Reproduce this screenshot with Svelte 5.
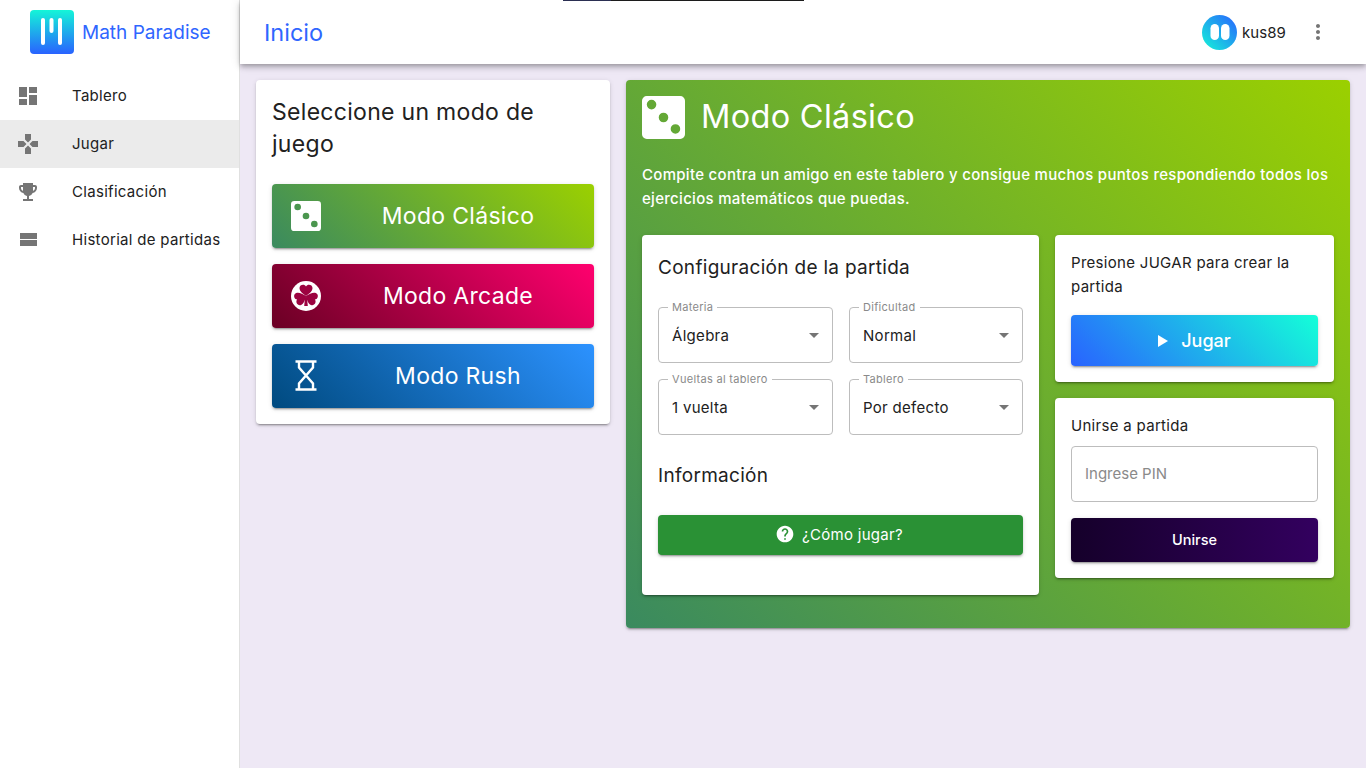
<script>
  const nav = [
    { label: 'Tablero', d: 'M3 13h8V3H3v10zm0 8h8v-6H3v6zm10 0h8V11h-8v10zm0-18v6h8V3h-8z' },
    { label: 'Jugar', active: true, d: 'M15 7.5V2H9v5.5l3 3 3-3zM7.5 9H2v6h5.5l3-3-3-3zM9 16.5V22h6v-5.5l-3-3-3 3zM16.5 9l-3 3 3 3H22V9h-5.5z' },
    { label: 'Clasificación', d: 'M19 5h-2V3H7v2H5c-1.1 0-2 .9-2 2v1c0 2.55 1.92 4.63 4.39 4.94.63 1.5 1.98 2.63 3.61 2.96V19H7v2h10v-2h-4v-3.1c1.63-.33 2.98-1.46 3.61-2.96C19.08 12.63 21 10.55 21 8V7c0-1.1-.9-2-2-2zM5 8V7h2v3.82C5.84 10.4 5 9.3 5 8zm14 0c0 1.3-.84 2.4-2 2.82V7h2v1z' },
    { label: 'Historial de partidas', d: 'M4 18h17v-6H4v6zM4 5v6h17V5H4z' }
  ];

  const selects = [
    { label: 'Materia', value: 'Álgebra' },
    { label: 'Dificultad', value: 'Normal' },
    { label: 'Vueltas al tablero', value: '1 vuelta' },
    { label: 'Tablero', value: 'Por defecto' }
  ];

  // rounded die with three cut-out dots
  const dice = 'M5 3H19A2 2 0 0 1 21 5V19A2 2 0 0 1 19 21H5A2 2 0 0 1 3 19V5A2 2 0 0 1 5 3ZM7 4.6a2 2 0 1 0 0 4a2 2 0 1 0 0-4ZM12 10a2 2 0 1 0 0 4a2 2 0 1 0 0-4ZM17 14.8a2 2 0 1 0 0 4a2 2 0 1 0 0-4Z';
  const lobe = 'M20 20C16.5 17.5 13.5 15 13.5 12C13.5 8.5 18.5 7.5 20 10.5C21.5 7.5 26.5 8.5 26.5 12C26.5 15 23.5 17.5 20 20Z';
</script>

<div class="layout">
  <aside class="sidebar">
    <div class="brand">
      <svg class="logo" viewBox="0 0 44 44">
        <defs>
          <linearGradient id="logoGrad" x1="0" y1="0" x2="0" y2="1">
            <stop offset="0" stop-color="#14f5d8" />
            <stop offset="1" stop-color="#2962ff" />
          </linearGradient>
        </defs>
        <rect width="44" height="44" rx="4" fill="url(#logoGrad)" />
        <rect x="11" y="8" width="4" height="27" rx="2" fill="#fff" />
        <rect x="19.5" y="8" width="4" height="15" rx="2" fill="#fff" />
        <rect x="28" y="8" width="4" height="27" rx="2" fill="#fff" />
      </svg>
      <span>Math Paradise</span>
    </div>
    <nav>
      {#each nav as item}
        <div class="nav-item" class:active={item.active}>
          <svg viewBox="0 0 24 24" width="24" height="24"><path d={item.d} fill="#757575" /></svg>
          <span>{item.label}</span>
        </div>
      {/each}
    </nav>
  </aside>

  <div class="main">
    <header>
      <div class="top-line"></div>
      <h1>Inicio</h1>
      <div class="user">
        <svg class="avatar" viewBox="0 0 35 35">
          <defs>
            <linearGradient id="avatarGrad" x1="0" y1="1" x2="1" y2="0">
              <stop offset="0" stop-color="#14f5d8" />
              <stop offset="1" stop-color="#2962ff" />
            </linearGradient>
          </defs>
          <circle cx="17.5" cy="17.5" r="17.5" fill="url(#avatarGrad)" />
          <rect x="8.5" y="9" width="8.5" height="16" rx="4.25" fill="#fff" />
          <rect x="19" y="9" width="8.5" height="16" rx="4.25" fill="#fff" />
        </svg>
        <span>kus89</span>
        <svg class="more" viewBox="0 0 24 24" width="24" height="24">
          <path fill="#757575" d="M12 8c1.1 0 2-.9 2-2s-.9-2-2-2-2 .9-2 2 .9 2 2 2zm0 2c-1.1 0-2 .9-2 2s.9 2 2 2 2-.9 2-2-.9-2-2-2zm0 6c-1.1 0-2 .9-2 2s.9 2 2 2 2-.9 2-2-.9-2-2-2z" />
        </svg>
      </div>
    </header>

    <main>
      <section class="card modes">
        <h2>Seleccione un modo de juego</h2>
        <button class="mode classic">
          <svg viewBox="0 0 24 24" width="40" height="40"><path d={dice} fill="#fff" fill-rule="evenodd" /></svg>
          <span>Modo Clásico</span>
        </button>
        <button class="mode arcade">
          <svg viewBox="0 0 40 40" width="40" height="40">
            <circle cx="20" cy="20" r="15" fill="#fff" />
            <g fill="#9c0340">
              <path d={lobe} />
              <path d={lobe} transform="rotate(112 20 20)" />
              <path d={lobe} transform="rotate(-112 20 20)" />
              <path d="M19.2 20h1.6l1 10h-3.6z" />
            </g>
          </svg>
          <span>Modo Arcade</span>
        </button>
        <button class="mode rush">
          <svg viewBox="0 0 40 40" width="40" height="40" fill="none" stroke="#fff" stroke-width="2.4">
            <path d="M9.5 5.5h21M9.5 33.5h21M13 5.5v6l14 16v6M27 5.5v6l-14 16v6" />
          </svg>
          <span>Modo Rush</span>
        </button>
      </section>

      <section class="card detail">
        <div class="detail-head">
          <svg viewBox="3 3 18 18" width="43" height="43"><path d={dice} fill="#fff" fill-rule="evenodd" /></svg>
          <h2>Modo Clásico</h2>
        </div>
        <p class="intro">Compite contra un amigo en este tablero y consigue muchos puntos respondiendo todos los ejercicios matemáticos que puedas.</p>

        <div class="columns">
          <div class="card config">
            <h3>Configuración de la partida</h3>
            <div class="fields">
              {#each selects as field}
                <div class="field">
                  <span class="field-label">{field.label}</span>
                  <span>{field.value}</span>
                  <i class="caret"></i>
                </div>
              {/each}
            </div>
            <h3 class="info">Información</h3>
            <button class="howto">
              <svg viewBox="0 0 24 24" width="20" height="20">
                <path fill="#fff" d="M12 2C6.48 2 2 6.48 2 12s4.48 10 10 10 10-4.48 10-10S17.52 2 12 2zm1 17h-2v-2h2v2zm2.07-7.75l-.9.92C13.45 12.9 13 13.5 13 15h-2v-.5c0-1.1.45-2.1 1.17-2.83l1.24-1.26c.37-.36.59-.86.59-1.41 0-1.1-.9-2-2-2s-2 .9-2 2H8c0-2.21 1.79-4 4-4s4 1.79 4 4c0 .88-.36 1.68-.93 2.25z" />
              </svg>
              <span>¿Cómo jugar?</span>
            </button>
          </div>

          <div class="side">
            <div class="card play">
              <p>Presione JUGAR para crear la partida</p>
              <button class="jugar"><i class="play-icon"></i><span>Jugar</span></button>
            </div>
            <div class="card join">
              <p>Unirse a partida</p>
              <input type="text" placeholder="Ingrese PIN" />
              <button class="unirse">Unirse</button>
            </div>
          </div>
        </div>
      </section>
    </main>
  </div>
</div>

<style>
  :global(body) {
    margin: 0;
    background: #eee8f5;
    color: #212121;
    font-family: Inter, "Liberation Sans", sans-serif;
    letter-spacing: .3px;
  }

  * {
    box-sizing: border-box;
  }

  h1, h2, h3, p {
    margin: 0;
    font-weight: 400;
  }

  button {
    border: 0;
    padding: 0;
    color: #fff;
    font-family: inherit;
    letter-spacing: inherit;
    border-radius: 4px;
    box-shadow: 0 3px 1px -2px rgba(0, 0, 0, .2), 0 2px 2px rgba(0, 0, 0, .14), 0 1px 5px rgba(0, 0, 0, .12);
  }

  .layout {
    display: flex;
    min-height: 768px;
  }

  .sidebar {
    width: 240px;
    flex-shrink: 0;
    background: #fff;
    border-right: 1px solid #e0e0e0;
  }

  .brand {
    height: 72px;
    padding: 10px 0 0 30px;
    display: flex;
    align-items: flex-start;
    gap: 8px;
    color: #2f66ff;
    font-size: 19px;
    letter-spacing: 0;
  }

  .brand span {
    line-height: 46px;
  }

  .logo {
    width: 44px;
    height: 44px;
  }

  .nav-item {
    height: 48px;
    padding-left: 16px;
    display: flex;
    align-items: center;
    gap: 32px;
    font-size: 15px;
  }

  .nav-item span {
    margin-bottom: 2px;
  }

  .nav-item.active {
    background: #ebebeb;
  }

  .main {
    flex: 1;
    min-width: 0;
  }

  header {
    position: relative;
    height: 64px;
    padding: 0 36px 0 24px;
    display: flex;
    align-items: center;
    justify-content: space-between;
    background: #fff;
    box-shadow: 0 2px 4px -1px rgba(0, 0, 0, .2), 0 4px 5px rgba(0, 0, 0, .14), 0 1px 10px rgba(0, 0, 0, .12);
  }

  .top-line {
    position: absolute;
    left: 323px;
    top: 0;
    width: 241px;
    height: 1px;
    background: linear-gradient(to right, #2b2f52 20%, #1c1c1c 20%);
  }

  h1 {
    font-size: 23.5px;
    color: #2f66ff;
    letter-spacing: 0;
  }

  .user {
    display: flex;
    align-items: center;
    font-size: 15px;
    letter-spacing: .1px;
  }

  .avatar {
    width: 35px;
    height: 35px;
    margin-right: 5px;
  }

  .more {
    margin-left: 20px;
  }

  main {
    padding: 16px;
    display: flex;
    align-items: flex-start;
    gap: 16px;
  }

  .card {
    background: #fff;
    border-radius: 4px;
    box-shadow: 0 3px 1px -2px rgba(0, 0, 0, .2), 0 2px 2px rgba(0, 0, 0, .14), 0 1px 5px rgba(0, 0, 0, .12);
  }

  .modes {
    width: 354px;
    flex-shrink: 0;
    padding: 16px;
    display: flex;
    flex-direction: column;
    gap: 16px;
  }

  .modes h2 {
    font-size: 23px;
    line-height: 32px;
    margin-bottom: 8px;
  }

  .mode {
    height: 64px;
    padding-left: 14px;
    display: flex;
    align-items: center;
    font-size: 23px;
  }

  .mode span {
    flex: 1;
    padding-right: 4px;
    text-align: center;
  }

  .classic, .detail {
    background: linear-gradient(45deg, #3a8a5f, #9bd000);
  }

  .arcade {
    background: linear-gradient(45deg, #6a0024, #ff006e);
  }

  .rush {
    background: linear-gradient(45deg, #004a7f, #2c92ff);
  }

  .detail {
    width: 724px;
    height: 548px;
    padding: 16px;
  }

  .detail-head {
    display: flex;
    align-items: center;
    gap: 16px;
    color: #fff;
  }

  .detail-head h2 {
    font-size: 32.5px;
    margin-top: -2px;
  }

  .intro {
    margin-top: 24px;
    color: #fff;
    font-size: 15px;
    font-weight: 500;
    line-height: 24px;
  }

  .columns {
    margin-top: 24px;
    display: flex;
    align-items: flex-start;
    gap: 16px;
  }

  .config {
    width: 397px;
    height: 360px;
    padding: 16px;
  }

  h3 {
    height: 32px;
    font-size: 19px;
    line-height: 34px;
  }

  .fields {
    margin-top: 24px;
    display: grid;
    grid-template-columns: 175px 174px;
    gap: 16px;
  }

  .field {
    position: relative;
    height: 56px;
    padding-left: 13px;
    display: flex;
    align-items: center;
    border: 1px solid #bdbdbd;
    border-radius: 4px;
    font-size: 15px;
  }

  .field-label {
    position: absolute;
    left: 9px;
    top: -7px;
    padding: 0 4px;
    background: #fff;
    color: #8a8a8a;
    font-size: 11px;
    line-height: 13px;
  }

  .caret {
    position: absolute;
    right: 13px;
    top: 25px;
    border: 5px solid transparent;
    border-top-color: #757575;
    border-bottom: 0;
  }

  .info {
    margin-top: 24px;
  }

  .howto {
    width: 100%;
    height: 40px;
    margin-top: 24px;
    padding: 0 3px 2px 0;
    display: flex;
    align-items: center;
    justify-content: center;
    gap: 7px;
    background: #2a9135;
    font-size: 15px;
  }

  .side {
    width: 279px;
    display: flex;
    flex-direction: column;
    gap: 16px;
  }

  .play, .join {
    padding: 16px;
    font-size: 15px;
  }

  .play p {
    line-height: 24px;
  }

  .jugar {
    width: 100%;
    height: 51px;
    margin-top: 16px;
    display: flex;
    align-items: center;
    justify-content: center;
    gap: 13px;
    background: linear-gradient(45deg, #2962ff, #14ffd8);
    font-size: 18px;
    font-weight: 500;
    letter-spacing: 0;
  }

  .play-icon {
    border-left: 10px solid #fff;
    border-top: 6px solid transparent;
    border-bottom: 6px solid transparent;
  }

  .join p {
    line-height: 24px;
  }

  input {
    display: block;
    width: 100%;
    height: 56px;
    margin-top: 8px;
    padding: 0 13px 2px;
    border: 1px solid #bdbdbd;
    border-radius: 4px;
    font-family: inherit;
    font-size: 15px;
    outline: none;
  }

  input::placeholder {
    color: #8a8a8a;
  }

  .unirse {
    width: 100%;
    height: 44px;
    margin-top: 16px;
    padding-bottom: 2px;
    background: linear-gradient(to right, #15002a, #33005f);
    font-size: 14.5px;
    font-weight: 500;
    letter-spacing: 0;
  }
</style>
